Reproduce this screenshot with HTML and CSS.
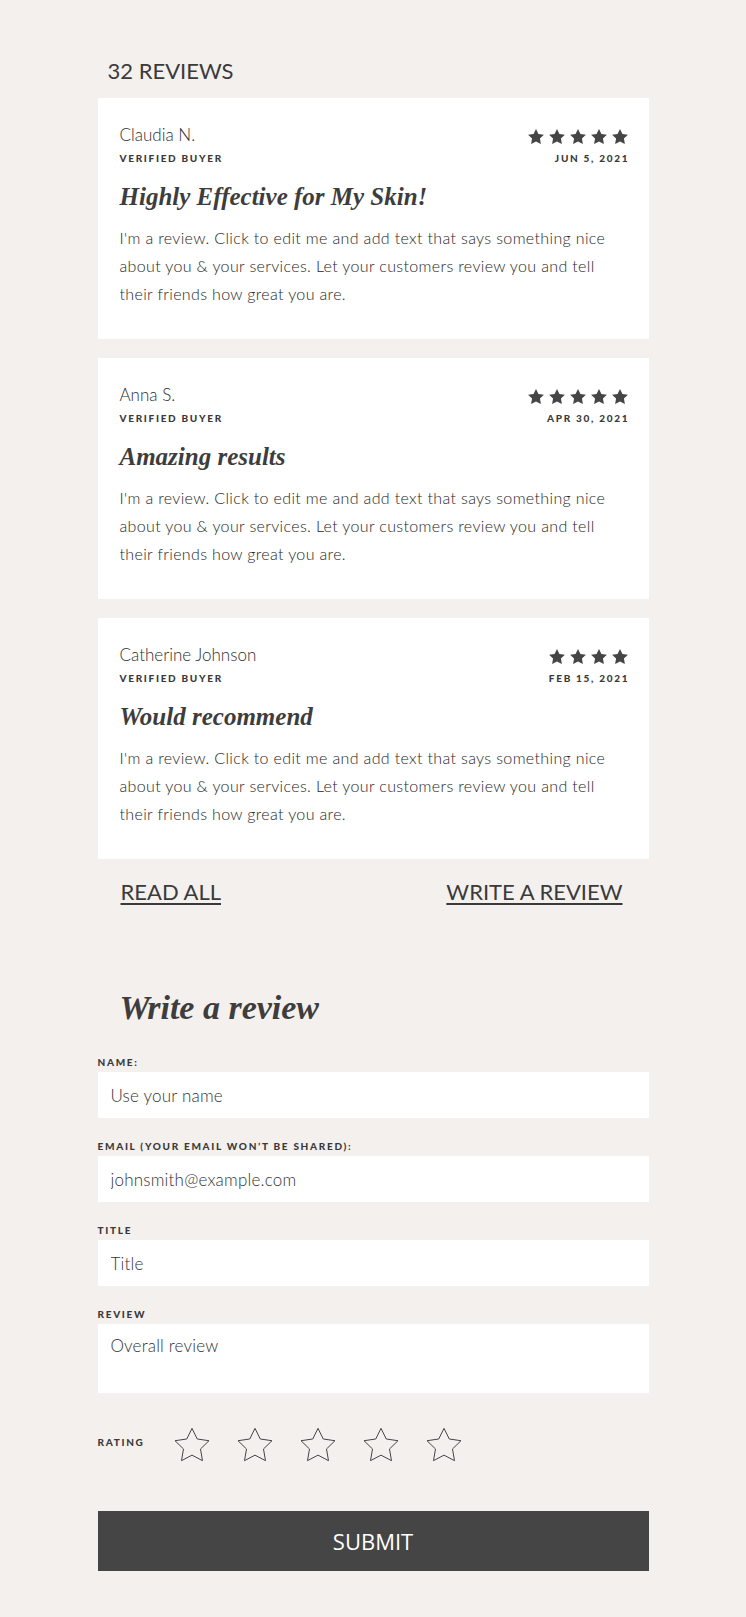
FILE: index.html
```html
<!DOCTYPE html>
<html lang="en">
<head>
<meta charset="utf-8">
<title>Reviews</title>
<link rel="stylesheet" href="styles.css">
</head>
<body>
<main class="page">
  <h2 class="count">32 REVIEWS</h2>

  <section class="reviews">
    <article class="card">
      <div class="card-head">
        <div class="who">
          <div class="name">Claudia N.</div>
          <div class="tag">VERIFIED BUYER</div>
        </div>
        <div class="when">
          <div class="stars">
            <svg class="star" viewBox="2 2 20 19"><path d="M12 2l3.09 6.26L22 9.27l-5 4.87 1.18 6.88L12 17.77l-6.18 3.25L7 14.14 2 9.27l6.91-1.01z"/></svg>
            <svg class="star" viewBox="2 2 20 19"><path d="M12 2l3.09 6.26L22 9.27l-5 4.87 1.18 6.88L12 17.77l-6.18 3.25L7 14.14 2 9.27l6.91-1.01z"/></svg>
            <svg class="star" viewBox="2 2 20 19"><path d="M12 2l3.09 6.26L22 9.27l-5 4.87 1.18 6.88L12 17.77l-6.18 3.25L7 14.14 2 9.27l6.91-1.01z"/></svg>
            <svg class="star" viewBox="2 2 20 19"><path d="M12 2l3.09 6.26L22 9.27l-5 4.87 1.18 6.88L12 17.77l-6.18 3.25L7 14.14 2 9.27l6.91-1.01z"/></svg>
            <svg class="star" viewBox="2 2 20 19"><path d="M12 2l3.09 6.26L22 9.27l-5 4.87 1.18 6.88L12 17.77l-6.18 3.25L7 14.14 2 9.27l6.91-1.01z"/></svg>
          </div>
          <div class="tag">JUN 5, 2021</div>
        </div>
      </div>
      <h3 class="title">Highly Effective for My Skin!</h3>
      <p class="text">I'm a review. Click to edit me and add text that says something nice about you &amp; your services. Let your customers review you and tell their friends how great you are.</p>
    </article>

    <article class="card">
      <div class="card-head">
        <div class="who">
          <div class="name">Anna S.</div>
          <div class="tag">VERIFIED BUYER</div>
        </div>
        <div class="when">
          <div class="stars">
            <svg class="star" viewBox="2 2 20 19"><path d="M12 2l3.09 6.26L22 9.27l-5 4.87 1.18 6.88L12 17.77l-6.18 3.25L7 14.14 2 9.27l6.91-1.01z"/></svg>
            <svg class="star" viewBox="2 2 20 19"><path d="M12 2l3.09 6.26L22 9.27l-5 4.87 1.18 6.88L12 17.77l-6.18 3.25L7 14.14 2 9.27l6.91-1.01z"/></svg>
            <svg class="star" viewBox="2 2 20 19"><path d="M12 2l3.09 6.26L22 9.27l-5 4.87 1.18 6.88L12 17.77l-6.18 3.25L7 14.14 2 9.27l6.91-1.01z"/></svg>
            <svg class="star" viewBox="2 2 20 19"><path d="M12 2l3.09 6.26L22 9.27l-5 4.87 1.18 6.88L12 17.77l-6.18 3.25L7 14.14 2 9.27l6.91-1.01z"/></svg>
            <svg class="star" viewBox="2 2 20 19"><path d="M12 2l3.09 6.26L22 9.27l-5 4.87 1.18 6.88L12 17.77l-6.18 3.25L7 14.14 2 9.27l6.91-1.01z"/></svg>
          </div>
          <div class="tag">APR 30, 2021</div>
        </div>
      </div>
      <h3 class="title">Amazing results</h3>
      <p class="text">I'm a review. Click to edit me and add text that says something nice about you &amp; your services. Let your customers review you and tell their friends how great you are.</p>
    </article>

    <article class="card">
      <div class="card-head">
        <div class="who">
          <div class="name">Catherine Johnson</div>
          <div class="tag">VERIFIED BUYER</div>
        </div>
        <div class="when">
          <div class="stars">
            <svg class="star" viewBox="2 2 20 19"><path d="M12 2l3.09 6.26L22 9.27l-5 4.87 1.18 6.88L12 17.77l-6.18 3.25L7 14.14 2 9.27l6.91-1.01z"/></svg>
            <svg class="star" viewBox="2 2 20 19"><path d="M12 2l3.09 6.26L22 9.27l-5 4.87 1.18 6.88L12 17.77l-6.18 3.25L7 14.14 2 9.27l6.91-1.01z"/></svg>
            <svg class="star" viewBox="2 2 20 19"><path d="M12 2l3.09 6.26L22 9.27l-5 4.87 1.18 6.88L12 17.77l-6.18 3.25L7 14.14 2 9.27l6.91-1.01z"/></svg>
            <svg class="star" viewBox="2 2 20 19"><path d="M12 2l3.09 6.26L22 9.27l-5 4.87 1.18 6.88L12 17.77l-6.18 3.25L7 14.14 2 9.27l6.91-1.01z"/></svg>
          </div>
          <div class="tag">FEB 15, 2021</div>
        </div>
      </div>
      <h3 class="title">Would recommend</h3>
      <p class="text">I'm a review. Click to edit me and add text that says something nice about you &amp; your services. Let your customers review you and tell their friends how great you are.</p>
    </article>
  </section>

  <nav class="actions">
    <a class="action" href="#">READ ALL</a>
    <a class="action" href="#">WRITE A REVIEW</a>
  </nav>

  <h2 class="form-title">Write a review</h2>

  <form class="form">
    <label class="field">
      <span class="label">NAME:</span>
      <input class="input" type="text" placeholder="Use your name">
    </label>
    <label class="field">
      <span class="label">EMAIL (YOUR EMAIL WON’T BE SHARED):</span>
      <input class="input" type="email" placeholder="johnsmith@example.com">
    </label>
    <label class="field">
      <span class="label">TITLE</span>
      <input class="input" type="text" placeholder="Title">
    </label>
    <label class="field">
      <span class="label">REVIEW</span>
      <textarea class="input area" placeholder="Overall review"></textarea>
    </label>
    <div class="rating">
      <span class="label rating-label">RATING</span>
      <div class="rate-stars">
        <svg class="rate-star" viewBox="1.4 1.4 21.2 20.2"><path d="M12 2l3.09 6.26L22 9.27l-5 4.87 1.18 6.88L12 17.77l-6.18 3.25L7 14.14 2 9.27l6.91-1.01z"/></svg>
        <svg class="rate-star" viewBox="1.4 1.4 21.2 20.2"><path d="M12 2l3.09 6.26L22 9.27l-5 4.87 1.18 6.88L12 17.77l-6.18 3.25L7 14.14 2 9.27l6.91-1.01z"/></svg>
        <svg class="rate-star" viewBox="1.4 1.4 21.2 20.2"><path d="M12 2l3.09 6.26L22 9.27l-5 4.87 1.18 6.88L12 17.77l-6.18 3.25L7 14.14 2 9.27l6.91-1.01z"/></svg>
        <svg class="rate-star" viewBox="1.4 1.4 21.2 20.2"><path d="M12 2l3.09 6.26L22 9.27l-5 4.87 1.18 6.88L12 17.77l-6.18 3.25L7 14.14 2 9.27l6.91-1.01z"/></svg>
        <svg class="rate-star" viewBox="1.4 1.4 21.2 20.2"><path d="M12 2l3.09 6.26L22 9.27l-5 4.87 1.18 6.88L12 17.77l-6.18 3.25L7 14.14 2 9.27l6.91-1.01z"/></svg>
      </div>
    </div>
    <button class="submit" type="button">SUBMIT</button>
  </form>
</main>
</body>
</html>
```

FILE: styles.css
```css
* {
  box-sizing: border-box;
}

html, body {
  margin: 0;
  padding: 0;
  background: #f4f0ed;
}

body {
  font-family: Lato, "Noto Sans", sans-serif;
  color: #3e3e3e;
}

.page {
  width: 551px;
  margin: 0 auto;
  padding: 58px 0 46px;
}

.count {
  margin: 0 0 14px;
  padding-left: 10px;
  font-size: 22px;
  line-height: 26px;
  font-weight: 400;
  color: #3a3a3a;
}

.reviews {
  display: flex;
  flex-direction: column;
  gap: 19px;
}

.card {
  background: #ffffff;
  padding: 27px 21px 31px 22px;
}

.card-head {
  display: flex;
  justify-content: space-between;
}

.who, .when {
  display: flex;
  flex-direction: column;
}

.when {
  align-items: flex-end;
}

.name {
  font-size: 17px;
  line-height: 20px;
  font-weight: 300;
  color: #2e2e2e;
}

.tag {
  margin-top: 7px;
  font-size: 10px;
  line-height: 12px;
  font-weight: 900;
  letter-spacing: 1.7px;
  color: #3a3a3a;
}

.when .tag {
  margin-right: -1.7px;
}

.stars {
  display: flex;
  gap: 5px;
  height: 20px;
  align-items: center;
  padding-top: 3px;
}

.star {
  width: 16px;
  height: 15px;
  fill: #454545;
}

.title {
  margin: 18px 0 0;
  font-family: "Liberation Serif", "DejaVu Serif", serif;
  font-style: italic;
  font-weight: 700;
  font-size: 25px;
  line-height: 30px;
  color: #3d3d3d;
}

.text {
  margin: 12px 0 0;
  max-width: 500px;
  font-size: 16px;
  line-height: 28px;
  font-weight: 300;
  letter-spacing: 0.35px;
  color: #262626;
}

.actions {
  display: flex;
  justify-content: space-between;
  margin-top: 20px;
  padding: 0 26px 0 23px;
}

.action {
  font-size: 22px;
  line-height: 26px;
  color: #3a3a3a;
  text-decoration: underline;
  text-decoration-thickness: 2px;
  text-underline-offset: 3px;
}

.form-title {
  margin: 83px 0 0;
  padding-left: 22px;
  font-family: "Liberation Serif", "DejaVu Serif", serif;
  font-style: italic;
  font-weight: 700;
  font-size: 34px;
  line-height: 40px;
  color: #3d3d3d;
}

.form {
  margin-top: 28px;
  display: flex;
  flex-direction: column;
}

.field {
  display: flex;
  flex-direction: column;
  margin-bottom: 22px;
}

.label {
  font-size: 10px;
  line-height: 12px;
  font-weight: 900;
  letter-spacing: 1.7px;
  color: #3a3a3a;
  margin-bottom: 4px;
}

.input {
  display: block;
  width: 100%;
  height: 46px;
  border: 0;
  outline: none;
  background: #ffffff;
  padding: 0 13px;
  font-family: Lato, "Noto Sans", sans-serif;
  font-size: 17px;
  font-weight: 300;
  letter-spacing: 0.2px;
  color: #2e2e2e;
}

.input::placeholder {
  color: #333333;
  opacity: 1;
}

.area {
  height: 69px;
  padding: 12px 13px;
  line-height: 20px;
  resize: none;
}

.rating {
  display: flex;
  align-items: center;
  margin-top: 12px;
}

.rating-label {
  width: 76px;
  margin-bottom: 0;
  padding-bottom: 5px;
}

.rate-stars {
  display: flex;
  gap: 27px;
}

.rate-star {
  width: 36px;
  height: 35px;
  fill: none;
  stroke: #444;
  stroke-width: 1px;
}

.rate-star path {
  vector-effect: non-scaling-stroke;
}

.submit {
  margin-top: 49px;
  height: 60px;
  width: 100%;
  border: 0;
  background: #454545;
  color: #ffffff;
  font-family: "Open Sans", Lato, sans-serif;
  font-size: 22px;
  font-weight: 400;
  cursor: pointer;
}
```
